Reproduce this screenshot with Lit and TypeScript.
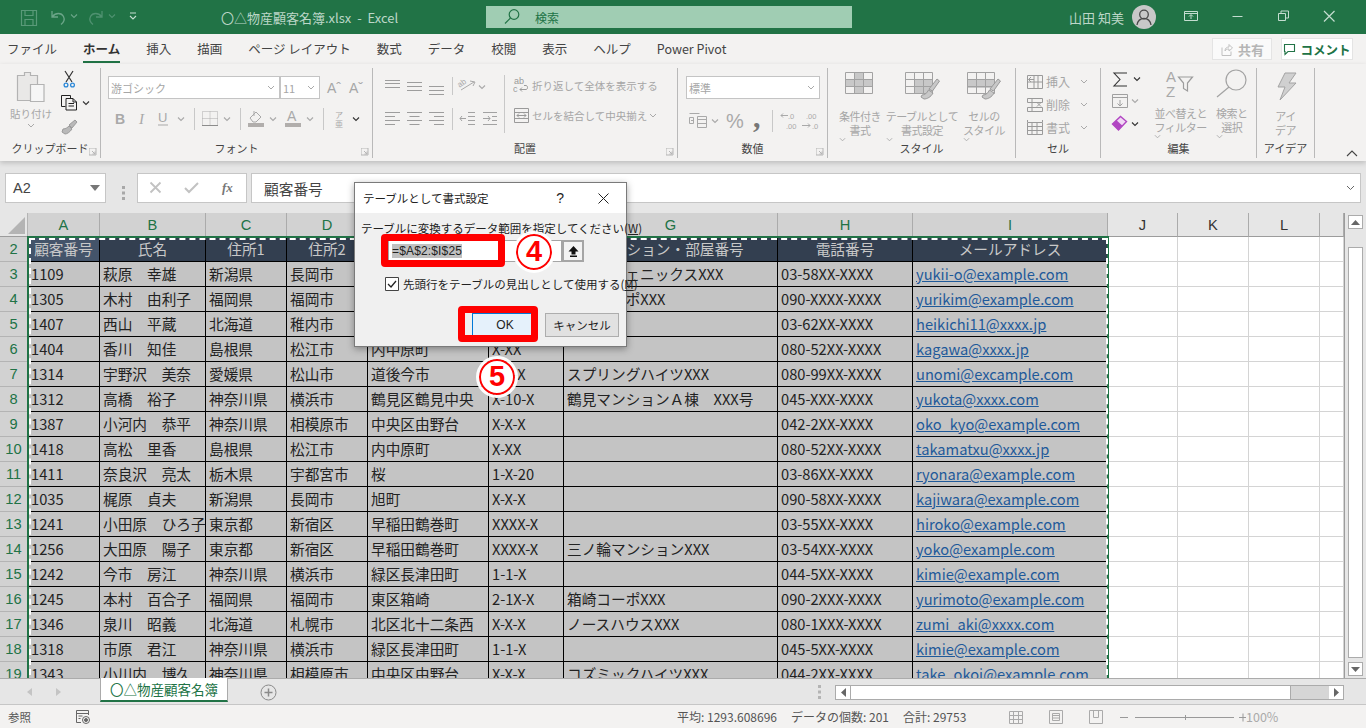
import { LitElement, css, html, svg } from "lit";
import { customElement } from "lit/decorators.js";

const G = "#a9a9a9";
const chev = (x: number, y: number, c = "#a9a9a9") =>
  svg`<path d="M${x - 3} ${y - 1.5}l3 3 3-3" fill="none" stroke=${c} stroke-width="1.1"/>`;
const launcher = (x: number, y: number) =>
  svg`<path d="M${x} ${y}h7v7h-7zM${x + 3} ${y + 3}l3 3M${x + 3.5} ${y + 6}h2.5v-2.5" fill="none" stroke="#b5b5b5"/>`;

const COLS = ["A", "B", "C", "D", "E", "F", "G", "H", "I", "J", "K", "L", ""];
const HEAD = ["顧客番号", "氏名", "住所1", "住所2", "住所3", "番地", "マンション・部屋番号", "電話番号", "メールアドレス"];
const ROWS = [
  ["1109", "萩原　幸雄", "新潟県", "長岡市", "中央区", "X-X-X", "ハイツフェニックスXXX", "03-58XX-XXXX", "yukii-o@example.com"],
  ["1305", "木村　由利子", "福岡県", "福岡市", "東区箱崎", "2-X-X", "箱崎コーポXXX", "090-XXXX-XXXX", "yurikim@example.com"],
  ["1407", "西山　平蔵", "北海道", "稚内市", "中央", "X-X", "", "03-62XX-XXXX", "heikichi11@xxxx.jp"],
  ["1404", "香川　知佳", "島根県", "松江市", "内中原町", "X-XX", "", "080-52XX-XXXX", "kagawa@xxxx.jp"],
  ["1314", "宇野沢　美奈", "愛媛県", "松山市", "道後今市", "X-X-X", "スプリングハイツXXX", "080-99XX-XXXX", "unomi@excample.com"],
  ["1312", "高橋　裕子", "神奈川県", "横浜市", "鶴見区鶴見中央", "X-10-X", "鶴見マンションＡ棟　XXX号", "045-XXX-XXXX", "yukota@xxxx.com"],
  ["1387", "小河内　恭平", "神奈川県", "相模原市", "中央区由野台", "X-X-X", "", "042-2XX-XXXX", "oko_kyo@example.com"],
  ["1418", "高松　里香", "島根県", "松江市", "内中原町", "X-XX", "", "080-52XX-XXXX", "takamatxu@xxxx.jp"],
  ["1411", "奈良沢　亮太", "栃木県", "宇都宮市", "桜", "1-X-20", "", "03-86XX-XXXX", "ryonara@example.com"],
  ["1035", "梶原　貞夫", "新潟県", "長岡市", "旭町", "X-X-X", "", "090-58XX-XXXX", "kajiwara@example.com"],
  ["1241", "小田原　ひろ子", "東京都", "新宿区", "早稲田鶴巻町", "XXXX-X", "", "03-55XX-XXXX", "hiroko@example.com"],
  ["1256", "大田原　陽子", "東京都", "新宿区", "早稲田鶴巻町", "XXXX-X", "三ノ輪マンションXXX", "03-54XX-XXXX", "yoko@example.com"],
  ["1242", "今市　房江", "神奈川県", "横浜市", "緑区長津田町", "1-1-X", "", "044-5XX-XXXX", "kimie@example.com"],
  ["1245", "本村　百合子", "福岡県", "福岡市", "東区箱崎", "2-1X-X", "箱崎コーポXXX", "090-2XXX-XXXX", "yurimoto@example.com"],
  ["1346", "泉川　昭義", "北海道", "札幌市", "北区北十二条西", "X-X-X", "ノースハウスXXX", "080-1XXX-XXXX", "zumi_aki@xxxx.com"],
  ["1318", "市原　君江", "神奈川県", "横浜市", "緑区長津田町", "1-1-X", "", "045-5XX-XXXX", "kimie@example.com"],
  ["1343", "小川内　博久", "神奈川県", "相模原市", "中央区由野台", "X-X-X", "コズミックハイツXXX", "044-2XX-XXXX", "take_okoi@example.com"],
];
const TABS = ["ファイル", "ホーム", "挿入", "描画", "ページ レイアウト", "数式", "データ", "校閲", "表示", "ヘルプ", "Power Pivot"];

const qat = html`<svg class="qat" width="130" height="34" viewBox="14 0 130 34" fill="none">
  <path d="M21.5 10.5h15v15h-15zM25 10.5v5h8v-5M25 25.5v-6h8v6" stroke="#5a9a79" stroke-width="1.2"/>
  <path d="M52 11v6h6M52.5 16.5c3-4 9-4 11 0 1.500 3 0 6-2.500 8" stroke="#6ba588" stroke-width="1.300"/>
  ${chev(74, 16, "#6ba588")}
  <path d="M102 11v6h-6M101.500 16.500c-3-4-9-4-11 0-1.500 3 0 6 2.500 8" stroke="#4f9170" stroke-width="1.300"/>
  ${chev(112, 16, "#4f9170")}
  <path d="M130 13h6M130 16l3 3 3-3" stroke="#c7dfd2" stroke-width="1.100"/>
</svg>`;

const magnifier = html`<svg width="18" height="18" viewBox="517 8 18 18" fill="none" stroke="#217346" stroke-width="1.200">
  <circle cx="528" cy="14.500" r="4.800"/><path d="M524.500 18l-5.500 5.500"/></svg>`;

const avatar = html`<svg width="24" height="24" viewBox="0 0 24 24" fill="none">
  <circle cx="12" cy="12" r="12" fill="#c8c8c8"/>
  <circle cx="12" cy="9.500" r="4.300" stroke="#4a4a4a" stroke-width="1.300"/>
  <path d="M5 20c.8-4.500 3.500-6.500 7-6.500s6.200 2 7 6.500" stroke="#4a4a4a" stroke-width="1.300"/></svg>`;

const winCtl = html`<svg class="winctl" width="170" height="34" viewBox="1190 0 170 34" fill="none" stroke="#c4ddd0">
  <path d="M1198.500 11.500h13v9h-13zM1198.500 13.500h13M1205 19v-4M1203 16.500l2-2 2 2"/>
  <path d="M1246.500 16.500h10"/>
  <path d="M1292.500 13.500h7v7h-7zM1295 13.500v-2.500h7.500v7H1299.500"/>
  <path d="M1338 11l10.500 10.500M1348.500 11L1338 21.500" stroke-width="1.200"/>
</svg>`;

const clipIcons = html`<svg class="clip-small" width="36" height="70" viewBox="56 68 36 70" fill="none">
  <path d="M62 71l7 11M70 71l-7 11" stroke="#333" stroke-width="1.200"/>
  <circle cx="63" cy="85" r="1.900" stroke="#2b88d8" stroke-width="1.300"/>
  <circle cx="69.500" cy="85" r="1.900" stroke="#2b88d8" stroke-width="1.300"/>
  <path d="M62.500 106.500h-4V95.500h9v3M63 98.500h7l3.500 3.500v8H63zM70 98.500v3.500h3.500M65.500 103.500h5.500M65.500 106h5.500" stroke="#222" stroke-width="1"/>
  ${chev(83, 103, "#333")}
  <path d="M66 125l6-5 2 2-5 6zM60 129c3 0 5-2 6-3l3 3c-2 3-5 5-7 5l-3-2z" fill="#b9b9b9" stroke="#9c9c9c"/>
</svg>`;

const pasteIcon = html`<svg width="30" height="32" viewBox="19 71 30 32" fill="none" stroke="#b3b3b3" stroke-width="1.200">
  <path d="M20.500 75.500h7v-3h6v3h7v25h-20z" fill="#e9e8e7"/>
  <path d="M33.500 84.500h13.500v17H33.500z" fill="#f6f6f6"/>
</svg>`;

const fontRow = html`<svg width="262" height="24" viewBox="108 107 262 24" fill="none">
  <text x="115" y="124" font-family="Liberation Sans" font-size="14" font-weight="700" fill=${G}>B</text>
  <text x="139" y="124" font-family="Liberation Serif" font-style="italic" font-size="15" fill=${G}>I</text>
  <text x="158" y="122" font-family="Liberation Sans" font-size="13" fill=${G}>U</text>
  <path d="M158 125h10" stroke=${G}/>
  ${chev(181, 119)}
  <path d="M194.500 108v22M240.500 108v22M323.500 108v22" stroke="#c8c8c8"/>
  <path d="M202.500 111.500h15v14h-15zM210 111.500v14M202.500 118.500h15" stroke="#adadad" stroke-dasharray="1 1"/>
  <path d="M202 125.500h16" stroke="#8c8c8c"/>
  ${chev(227, 119)}
  <path d="M250 118l6-6 5 5-5 5h-3zM254 111v5" stroke=${G}/>
  <path d="M248 123h16v4h-16z" fill="#b1aeac"/>
  ${chev(273, 119)}
  <text x="287" y="121" font-family="Liberation Sans" font-size="14" fill=${G}>A</text>
  <path d="M285 123h16v4h-16z" fill="#b1aeac"/>
  ${chev(310, 119)}
  <text x="335" y="118" font-family="Noto Sans CJK JP" font-size="8" fill=${G}>ア</text>
  <text x="335" y="127" font-family="Noto Sans CJK JP" font-size="8" fill=${G}>亜</text>
  ${chev(356, 119, "#333")}
</svg>`;

const lines = (x: number, ys: number[], ws: number[], align: number) =>
  svg`<path d=${ys.map((y, i) => `M${x + (15 - ws[i]) * align} ${y}.5h${ws[i]}`).join("")} stroke="#9d9d9d"/>`;

const alignIcons = html`<svg width="124" height="60" viewBox="381 74 124 60" fill="none">
  ${lines(385, [80, 83, 87], [15, 15, 15], 0)}
  ${lines(407, [82, 86, 90], [15, 15, 15], 0)}
  ${lines(429, [86, 90, 94], [15, 15, 15], 0)}
  ${lines(385, [112, 116, 120, 124], [15, 10, 15, 10], 0)}
  ${lines(407, [112, 116, 120, 124], [15, 10, 15, 10], 0.5)}
  ${lines(429, [112, 116, 120, 124], [15, 10, 15, 10], 1)}
  <path d="M452.500 77v18M452.500 108v22M504.500 75v58" stroke="#c8c8c8"/>
  <path d="M461 90l13-8M470 81l5 1-2 4" stroke=${G}/>
  <text x="459" y="86" font-family="Liberation Sans" font-size="8" fill=${G} transform="rotate(-35 462 86)">ab</text>
  ${chev(482, 87)}
  <path d="M468 112.500h7M468 116.500h7M468 120.500h7M468 124.500h7M466 118.500h-6M462 116l-2 2.500 2 2.500M483 112.500h14M483 124.500h14M492 116.500h5M492 120.500h5M483 118.500h7M488 116l2 2.500-2 2.500" stroke="#a2a2a2"/>
</svg>`;

const wrapIcon = html`<svg width="17" height="17" viewBox="0 0 17 17" fill="none">
  <text x="1" y="7" font-family="Liberation Sans" font-size="9" fill="#9a9a9a">ab</text>
  <text x="0" y="15" font-family="Liberation Sans" font-size="9" fill="#9a9a9a">c</text>
  <path d="M7 12.500h6c2 0 2-4 0-4h-2M9 10.500l-2 2 2 2" stroke="#9a9a9a"/></svg>`;
const mergeIcon = html`<svg width="17" height="17" viewBox="0 0 17 17" fill="none" stroke="#9a9a9a">
  <path d="M1.500 1.500h14v14h-14zM1.500 5.500h14M1.500 11.500h14M4 8.500h9M6 6.500l-2 2 2 2M11 6.500l2 2-2 2"/></svg>`;

const numRow = html`<svg width="136" height="28" viewBox="685 106 136 28" fill="none">
  <path d="M688.500 111.500h10M688.500 115.500h4v6h-4zM696.500 114.500h9v11h-9zM696.500 117.500h9M696.500 121.500h9M690 118.500h2" stroke=${G}/>
  ${chev(714, 119)}
  <text x="725" y="126" font-family="Liberation Sans" font-size="20" fill=${G}>%</text>
  <text x="752" y="125" font-family="Liberation Serif" font-size="30" font-weight="700" fill="#777">,</text>
  <path d="M771.500 108v22" stroke="#c8c8c8"/>
  <text x="787" y="117" font-family="Liberation Sans" font-size="7.500" fill=${G}>.0</text>
  <text x="785" y="127" font-family="Liberation Sans" font-size="7.500" fill=${G}>.00</text>
  <path d="M780 113.500h7M782 111.500l-2 2 2 2" stroke=${G}/>
  <text x="805" y="117" font-family="Liberation Sans" font-size="7.500" fill=${G}>.00</text>
  <text x="811" y="127" font-family="Liberation Sans" font-size="7.500" fill=${G}>.0</text>
  <path d="M801 123.500h8M807 121.500l2 2-2 2" stroke=${G}/>
</svg>`;

const gridBase = (x: number) =>
  svg`<path d="M${x}.5 75.500h27v21h-27zM${x}.5 82.500h27M${x}.5 89.500h27M${x + 9}.5 75.500v21M${x + 18}.5 75.500v21" stroke="#a2a2a2"/>`;
const brush = (x: number) =>
  svg`<path d="M${x} 92l8-10 2.500 2-7 10zM${x - 7} 98c3 0 5-2 6.500-5l4.500 3c-2 4-6 6-9 6l-3-2z" fill="#c8c8c8" stroke="#9a9a9a"/>`;

const condIcon = html`<svg width="30" height="24" viewBox="846 74 30 24" fill="none">
  <path d="M855 76h9v6h9v7h-9v7h-9zM846 83h9v6h-9z" fill="#c8c8c8"/>${gridBase(846)}</svg>`;
const tableIcon = html`<svg width="36" height="30" viewBox="905 74 36 30" fill="none">
  <path d="M916 83h18v14h-18z" fill="#c8c8c8"/>${gridBase(906)}${brush(930)}</svg>`;
const styleIcon = html`<svg width="36" height="30" viewBox="966 74 36 30" fill="none">
  <path d="M967 82h27v9h-27z" fill="#c8c8c8"/>${gridBase(967)}${brush(990)}</svg>`;

const cellIcon = (p: string) => html`<svg width="17" height="17" viewBox="0 0 17 17" fill="none" stroke="#9a9a9a"><path d=${p}/></svg>`;
const insIcon = cellIcon("M1.500 2.500h15v13h-15zM1.500 9h15M8 2.500v13M12 2.500v13M8 6.500H2.500M5 4l-2.500 2.500L5 9");
const delIcon = cellIcon("M1.500 2.500h15v4h-15zM1.500 11.500h15v4h-15zM6 2.500v13M11 6.500l4 4M15 6.500l-4 4");
const fmtIcon = cellIcon("M1.500 3.500h15v12h-15zM1.500 7.500h15M1.500 11.500h15M6 3.500v12M11 3.500v12M1.500 1v2M16.500 1v2");

const editSmall = html`<svg width="34" height="66" viewBox="1110 70 34 66" fill="none">
  <path d="M1127 73h-13l6 6.500-6 6.500h13" stroke="#333" stroke-width="1.100"/>
  ${chev(1137, 79, "#333")}
  <path d="M1112.500 94.500h15v13h-15zM1112.500 97.500h15M1120 100v6M1117.500 103.500l2.500 2.500 2.500-2.500" stroke="#a0a0a0"/>
  ${chev(1135, 101)}
  <path d="M1112.500 124l8-7.500 6 5-8 8.500z" fill="#f1d8f5" stroke="#b146c2" stroke-width="1.400"/>
  <path d="M1112.500 124l4-3.800 6 5.500-4 4.500z" fill="#b146c2"/>
  ${chev(1135, 124, "#333")}
</svg>`;

const sortIcon = html`<svg width="32" height="30" viewBox="1162 71 32 30" fill="none">
  <text x="1163" y="85" font-family="Liberation Sans" font-size="15" fill=${G}>A</text>
  <text x="1163" y="100" font-family="Liberation Sans" font-size="15" fill=${G}>Z</text>
  <path d="M1175.500 80h14l-5 6v8l-4-2.500V86z" stroke="#9c9c9c" stroke-width="1.200"/>
</svg>`;
const findIcon = html`<svg width="32" height="30" viewBox="1211 71 32 30" fill="none" stroke="#a3a3a3" stroke-width="1.200">
  <circle cx="1231" cy="83" r="10"/><path d="M1224 90l-12 10"/></svg>`;
const boltIcon = html`<svg width="24" height="30" viewBox="1274 71 24 30" fill="none">
  <path d="M1285 73h11l-7 10h7l-16 17 5-13h-7z" fill="#d0d0d0" stroke="#a3a3a3"/></svg>`;

const launchSvg = (x: number) => html`<svg class="launch" width="8" height="8" viewBox="${x} 150 8 8" fill="none">${launcher(x, 150)}</svg>`;

@customElement("app-root")
export class AppRoot extends LitElement {
  static styles = css`
    :host {
      display: block;
      width: 1366px;
      height: 728px;
      overflow: hidden;
      position: relative;
      background: #e6e6e6;
      font-family: "Noto Sans CJK JP", "Liberation Sans", sans-serif;
      color: #444;
    }
    svg {
      display: block;
      flex: none;
    }

    .titlebar {
      height: 34px;
      background: #217346;
      display: flex;
      align-items: center;
      color: #bcd7c8;
      font-size: 13px;
    }
    .qat {
      margin-left: 14px;
    }
    .doc {
      width: 265px;
      margin-left: 77px;
      white-space: pre;
    }
    .search {
      width: 366px;
      height: 22px;
      background: #a0cdb3;
      color: #217346;
      display: flex;
      align-items: center;
      gap: 14px;
      padding-left: 17px;
      box-sizing: border-box;
      font-size: 12px;
    }
    .user {
      margin-left: 217px;
      width: 63px;
    }
    .winctl {
      margin-left: 20px;
    }

    .tabs {
      height: 30px;
      background: #f3f2f1;
      display: flex;
      align-items: center;
      padding-left: 7px;
      gap: 26px;
      font-size: 12.5px;
    }
    .tab {
      position: relative;
      line-height: 26px;
      white-space: nowrap;
    }
    .tab.on {
      font-weight: 700;
      color: #333;
    }
    .tab.on::after {
      content: "";
      position: absolute;
      left: 0;
      right: 0;
      bottom: -1px;
      height: 2px;
      background: #217346;
    }
    .share {
      margin-left: auto;
      width: 60px;
      height: 22px;
      box-sizing: border-box;
      background: #fafafa;
      border: 1px solid #e4e4e4;
      color: #b5b5b5;
      font-size: 13px;
      font-weight: 700;
      display: flex;
      align-items: center;
      justify-content: center;
      gap: 5px;
    }
    .comment {
      width: 72px;
      height: 22px;
      margin: 0 13px 0 -17px;
      box-sizing: border-box;
      background: #fff;
      border: 1px solid #e4e4e4;
      color: #217346;
      font-size: 12.5px;
      font-weight: 700;
      display: flex;
      align-items: center;
      justify-content: center;
      gap: 4px;
    }

    .ribbon {
      height: 97px;
      box-sizing: border-box;
      background: #f3f2f1;
      padding-top: 4px;
      display: flex;
      align-items: flex-start;
      box-shadow: 0 2px 5px rgba(0, 0, 0, 0.18);
      position: relative;
      font-size: 10.5px;
      color: #a6a6a6;
    }
    .group {
      height: 90px;
      box-sizing: border-box;
      border-right: 1px solid #b9b9b9;
      display: flex;
      flex-direction: column;
      position: relative;
      flex: none;
    }
    .body {
      flex: 1;
      display: flex;
      min-height: 0;
    }
    .glabel {
      height: 17px;
      line-height: 15px;
      text-align: center;
      font-size: 11px;
      color: #444;
      white-space: nowrap;
    }
    .launch {
      position: absolute;
      right: 3px;
      bottom: 2px;
    }
    .g-clip {
      width: 101px;
    }
    .g-font {
      width: 272px;
    }
    .g-align {
      width: 305px;
    }
    .g-num {
      width: 150px;
    }
    .g-style {
      width: 188px;
    }
    .g-cell {
      width: 85px;
    }
    .g-edit {
      width: 156px;
    }
    .g-idea {
      width: 58px;
    }
    .paste {
      width: 56px;
      padding-top: 3px;
      display: flex;
      flex-direction: column;
      align-items: center;
      margin-left: 3px;
      box-sizing: border-box;
      line-height: 14px;
    }
    .paste span {
      margin-top: 4px;
      white-space: nowrap;
    }
    .paste svg:last-child {
      margin-top: 2px;
    }
    .font-body {
      flex-direction: column;
      padding: 8px 0 0 7px;
    }
    .combos {
      display: flex;
      align-items: center;
      height: 23px;
      margin-bottom: 8px;
      width: 256px;
    }
    .combo {
      height: 23px;
      box-sizing: border-box;
      background: #fff;
      border: 1px solid #c4c4c4;
      display: flex;
      align-items: center;
      justify-content: space-between;
      padding: 0 4px 0 2px;
      font-size: 11px;
    }
    .combo.f {
      width: 172px;
    }
    .combo.s {
      width: 40px;
    }
    .combo.n {
      width: 134px;
    }
    .grow {
      font-size: 14px;
      font-family: "Liberation Sans", sans-serif;
      margin-left: 7px;
      width: 15px;
    }
    .align-body {
      padding: 6px 0 0 8px;
    }
    .wrapcol {
      margin-left: 8px;
      display: flex;
      flex-direction: column;
      gap: 12px;
      padding-top: 2px;
    }
    .wrapcol div {
      display: flex;
      align-items: center;
      gap: 2px;
      height: 18px;
      white-space: nowrap;
    }
    .num-body {
      flex-direction: column;
      padding: 8px 0 0 8px;
    }
    .num-body .combo {
      margin-bottom: 9px;
    }
    .num-body svg.row {
      margin-left: -1px;
    }
    .big-row {
      padding-top: 3px;
    }
    .big {
      display: flex;
      flex-direction: column;
      align-items: center;
      line-height: 14px;
      text-align: center;
      white-space: nowrap;
      font-size: 11px;
      letter-spacing: -0.5px;
    }
    .big .txt {
      position: absolute;
      top: 38px;
    }
    .big svg.icon {
      margin-bottom: 0;
    }
    .s1 {
      width: 64px;
      margin-left: 0;
    }
    .style-body .big {
      position: relative;
      width: 62px;
    }
    .style-body {
      padding-left: 1px;
    }
    .cell-body {
      flex-direction: column;
      padding: 2px 0 0 10px;
    }
    .cell-row {
      height: 23px;
      display: flex;
      align-items: center;
      gap: 3px;
      font-size: 12px;
    }
    .cell-row svg:last-child {
      margin-left: 7px;
    }
    .edit-body .big {
      position: relative;
    }
    .edit-small {
      margin: 2px 0 0 9px;
    }
    .sort {
      width: 66px;
      margin-left: 7px;
    }
    .find {
      width: 54px;
      margin-left: -3px;
    }
    .idea {
      width: 58px;
      position: relative;
    }
    .collapse {
      position: absolute;
      right: 8px;
      bottom: 4px;
    }

    .fbar {
      height: 52px;
      box-sizing: border-box;
      padding: 12px 5px 0;
      display: flex;
      gap: 4px;
      align-items: flex-start;
    }
    .fbox {
      height: 30px;
      box-sizing: border-box;
      background: #fff;
      border: 1px solid #c6c6c6;
      display: flex;
      align-items: center;
    }
    .name {
      width: 101px;
      justify-content: space-between;
      padding: 0 5px 0 7px;
      font-size: 14.5px;
      font-family: "Liberation Sans", sans-serif;
    }
    .dots {
      width: 27px;
      display: flex;
      justify-content: center;
      margin-right: -4px;
      align-self: center;
    }
    .btns {
      width: 110px;
    }
    .input {
      flex: 1;
      padding-left: 12px;
      font-size: 14.7px;
      color: #444;
      justify-content: space-between;
      padding-right: 5px;
    }

    .sheet {
      height: 465px;
      display: flex;
      position: relative;
      overflow: hidden;
    }
    .grid {
      width: 1344px;
      flex: none;
      display: grid;
      grid-template-columns: 28px 72px 106px 81px 81px 121px 75px 214px 135px 195px 70px 71px 71px 24px;
      grid-auto-rows: 25px;
      grid-template-rows: 24px;
      background: #fff;
      font-size: 14.67px;
      align-content: start;
    }
    .corner {
      background: #e6e6e6;
      border-right: 1px solid #b4b4b4;
      border-bottom: 1px solid #9c9c9c;
      box-sizing: border-box;
    }
    .colh {
      box-sizing: border-box;
      background: #d2d2d2;
      color: #217346;
      border-right: 1px solid #ababab;
      border-bottom: 1px solid #9c9c9c;
      display: flex;
      align-items: center;
      justify-content: center;
      font-family: "Liberation Sans", sans-serif;
    }
    .colh.off {
      background: #e6e6e6;
      color: #333;
    }
    .rowh {
      box-sizing: border-box;
      background: #d2d2d2;
      color: #217346;
      border-right: 1px solid #ababab;
      border-bottom: 1px solid #b4b4b4;
      display: flex;
      align-items: center;
      justify-content: center;
      font-family: "Liberation Sans", sans-serif;
    }
    .c {
      box-sizing: border-box;
      background: #c4c4c4;
      color: #222;
      border-right: 1px solid #000;
      border-bottom: 1px solid #000;
      padding-left: 3px;
      overflow: hidden;
      white-space: nowrap;
      line-height: 24px;
    }
    .c.h {
      background: #333f50;
      color: #c8c8c8;
      text-align: center;
      padding: 0;
    }
    .c.a {
      background: #44546a;
    }
    .c.l {
      color: #1f5a9a;
      text-decoration: underline;
    }
    .e {
      box-sizing: border-box;
      border-right: 1px solid #d4d4d4;
      border-bottom: 1px solid #d4d4d4;
    }
    .vbar {
      width: 22px;
      flex: none;
      box-sizing: border-box;
      border-left: 1px solid #9c9c9c;
      margin-top: 0;
      padding: 2px 3px 2px 3px;
      display: flex;
      flex-direction: column;
      align-items: stretch;
    }
    .sbtn {
      height: 14px;
      flex: none;
      box-sizing: border-box;
      background: #fff;
      border: 1px solid #ababab;
      display: flex;
      align-items: center;
      justify-content: center;
    }
    .thumb {
      flex: 1;
      background: #fff;
      border: 1px solid #ababab;
      box-sizing: border-box;
      margin: 18px 0 4px;
    }
    .march {
      position: absolute;
      left: 27px;
      top: 23px;
      width: 1082px;
      height: 470px;
      box-sizing: border-box;
      border: 2px solid #217346;
    }
    .march::before {
      content: "";
      position: absolute;
      inset: 0;
      border: 2px dashed #fff;
      border-right-color: #fff;
      margin: -0.5px;
    }

    .sheets {
      height: 27px;
      box-sizing: border-box;
      border-top: 1px solid #ababab;
      border-bottom: 1px solid #c6c6c6;
      background: #e6e6e6;
      display: flex;
      align-items: flex-start;
    }
    .nav {
      width: 100px;
      margin-top: 6px;
    }
    .sheet-tab {
      width: 128px;
      height: 24px;
      box-sizing: border-box;
      margin-top: -1px;
      background: #fff;
      border-left: 1px solid #ababab;
      border-right: 1px solid #ababab;
      border-bottom: 2px solid #217346;
      color: #217346;
      font-size: 13.5px;
      line-height: 23px;
      text-align: center;
    }
    .plus {
      margin: 5px 0 0 32px;
    }
    .sdots {
      margin: 6px 0 0 541px;
    }
    .hbar {
      width: 509px;
      height: 15px;
      margin: 6px 0 0 14px;
      box-sizing: border-box;
      border: 1px solid #ababab;
      background: #d6d6d6;
      display: flex;
      justify-content: space-between;
    }
    .hbtn {
      width: 14px;
      background: #fff;
      display: flex;
      align-items: center;
      justify-content: center;
    }
    .hthumb {
      width: 439px;
      background: #fff;
      border: 1px solid #ababab;
      border-width: 0 1px;
      margin-right: auto;
    }

    .status {
      height: 23px;
      background: #f3f2f1;
      display: flex;
      align-items: center;
      font-size: 11.5px;
      color: #555;
      padding-left: 8px;
    }
    .status .mode {
      width: 67px;
    }
    .stats {
      margin-left: 586px;
      width: 329px;
      display: flex;
      gap: 14px;
      white-space: nowrap;
      font-size: 12px;
    }
    .zoomv {
      color: #aaa;
      font-size: 12.5px;
      margin-left: 0;
      white-space: nowrap;
    }

    .dialog {
      position: absolute;
      left: 354px;
      top: 182px;
      width: 273px;
      height: 165px;
      box-sizing: border-box;
      background: #f0f0f0;
      border: 1px solid #7a7a7a;
      box-shadow: 0 2px 7px rgba(0, 0, 0, 0.35);
      color: #222;
      font-size: 11.5px;
      display: flex;
      flex-direction: column;
    }
    .d-title {
      height: 30px;
      flex: none;
      background: #fff;
      display: flex;
      align-items: center;
      padding-left: 8px;
      font-size: 11.5px;
    }
    .d-title .q {
      margin-left: auto;
      margin-right: 34px;
      font-family: "Liberation Sans", sans-serif;
      font-size: 14px;
    }
    .d-title svg {
      margin-right: 17px;
    }
    .d-label {
      margin: 7px 0 0 6px;
      white-space: nowrap;
      line-height: 16px;
    }
    u {
      text-underline-offset: 1px;
    }
    .d-range {
      margin: 4px 0 0 33px;
      height: 22px;
      display: flex;
      width: 196px;
    }
    .d-input {
      width: 174px;
      box-sizing: border-box;
      background: #fff;
      border: 1px solid #a5a5a5;
      font-family: "Liberation Sans", sans-serif;
      font-size: 12px;
      line-height: 20px;
      padding-left: 3px;
    }
    .d-input span {
      background: #c0c0c0;
      color: #222;
      letter-spacing: 0.15px;
    }
    .d-up {
      width: 22px;
      box-sizing: border-box;
      background: #f3f3f3;
      border: 2px solid #a5a5a5;
      display: flex;
      align-items: center;
      justify-content: center;
    }
    .d-check {
      margin: 14px 0 0 30px;
      display: flex;
      align-items: center;
      gap: 4px;
      white-space: nowrap;
    }
    .d-btns {
      display: flex;
      gap: 7px;
      margin: 21px 0 0 117px;
      align-items: center;
    }
    .b {
      height: 24px;
      box-sizing: border-box;
      background: #e1e1e1;
      border: 1px solid #adadad;
      display: flex;
      align-items: center;
      justify-content: center;
      font-size: 11.5px;
    }
    .b.ok {
      width: 66px;
      background: #e5f1fb;
      border-color: #0078d7;
      font-family: "Liberation Sans", sans-serif;
      font-size: 12px;
    }
    .b.no {
      width: 74px;
    }
    .redbox {
      position: absolute;
      box-sizing: border-box;
      border: 7px solid #ff0000;
      border-radius: 4px;
    }
    .r1 {
      left: 381px;
      top: 234px;
      width: 124px;
      height: 33px;
    }
    .r2 {
      left: 458px;
      top: 306px;
      width: 80px;
      height: 36px;
    }
    .num {
      position: absolute;
      width: 36px;
      height: 36px;
      box-sizing: border-box;
      border-radius: 50%;
      background: #fff;
      border: 2px solid #ff0000;
      outline: 3px solid rgba(255, 255, 255, 0.95);
      color: #ff0000;
      font-family: "Liberation Sans", sans-serif;
      font-weight: 700;
      font-size: 29px;
      line-height: 31px;
      text-align: center;
    }
    .n4 {
      left: 516px;
      top: 234px;
    }
    .n5 {
      left: 479px;
      top: 359px;
    }
  `;

  render() {
    return html`
      <div class="titlebar">
        ${qat}
        <div class="doc">〇△物産顧客名簿.xlsx  -  Excel</div>
        <div class="search">${magnifier}<span>検索</span></div>
        <div class="user">山田 知美</div>
        ${avatar} ${winCtl}
      </div>
      <div class="tabs">
        ${TABS.map((t, i) => html`<div class="tab ${i === 1 ? "on" : ""}">${t}</div>`)}
        <div class="share">
          <svg width="13" height="13" viewBox="0 0 13 13" fill="none" stroke="#c0c0c0"><path d="M2 4.500v8h9v-4M5 8c0-3 2-4 4-4V1.500l3.500 3.500L9 8V6c-2 0-3 .5-4 2z"/></svg>共有
        </div>
        <div class="comment">
          <svg width="13" height="13" viewBox="0 0 13 13" fill="none" stroke="#217346" stroke-width="1.100"><path d="M1.500 1.500h10v7H5l-3 3v-3h-.5z"/></svg>コメント
        </div>
      </div>
      <div class="ribbon">
        ${this.renderClipboard()} ${this.renderFont()} ${this.renderAlign()} ${this.renderNumber()}
        ${this.renderStyles()} ${this.renderCells()} ${this.renderEdit()} ${this.renderIdeas()}
        <svg class="collapse" width="12" height="7" viewBox="0 0 12 7" fill="none" stroke="#444" stroke-width="1.100"><path d="M1 6l5-5 5 5"/></svg>
      </div>
      ${this.renderFormulaBar()} ${this.renderSheet()} ${this.renderTabs()} ${this.renderStatus()} ${this.renderDialog()}
    `;
  }

  renderClipboard() {
    return html`<div class="group g-clip">
      <div class="body">
        <div class="paste">
          ${pasteIcon}<span>貼り付け</span>
          <svg width="8" height="5" viewBox="0 0 8 5" fill="none" stroke="#a9a9a9"><path d="M1 1l3 3 3-3"/></svg>
        </div>
        ${clipIcons}
      </div>
      <div class="glabel">クリップボード</div>
      ${launchSvg(92)}
    </div>`;
  }

  renderFont() {
    return html`<div class="group g-font">
      <div class="body font-body">
        <div class="combos">
          <div class="combo f"><span>游ゴシック</span><svg width="8" height="5" viewBox="0 0 8 5" fill="none" stroke="#a9a9a9"><path d="M1 1l3 3 3-3"/></svg></div>
          <div class="combo s"><span>11</span><svg width="8" height="5" viewBox="0 0 8 5" fill="none" stroke="#a9a9a9"><path d="M1 1l3 3 3-3"/></svg></div>
          <span class="grow">Aˆ</span><span class="grow">Aˇ</span>
        </div>
        ${fontRow}
      </div>
      <div class="glabel">フォント</div>
      ${launchSvg(361)}
    </div>`;
  }

  renderAlign() {
    return html`<div class="group g-align">
      <div class="body align-body">
        ${alignIcons}
        <div class="wrapcol">
          <div>${wrapIcon}折り返して全体を表示する</div>
          <div>${mergeIcon}セルを結合して中央揃え <svg width="8" height="5" viewBox="0 0 8 5" fill="none" stroke="#a9a9a9"><path d="M1 1l3 3 3-3"/></svg></div>
        </div>
      </div>
      <div class="glabel">配置</div>
      ${launchSvg(666)}
    </div>`;
  }

  renderNumber() {
    return html`<div class="group g-num">
      <div class="body num-body">
        <div class="combo n"><span>標準</span><svg width="8" height="5" viewBox="0 0 8 5" fill="none" stroke="#a9a9a9"><path d="M1 1l3 3 3-3"/></svg></div>
        <svg class="row" width="136" height="28" viewBox="685 106 136 28"><use href="#none"></use></svg>
      </div>
      <div class="glabel">数値</div>
      ${launchSvg(816)}
    </div>`.strings ? html`<div class="group g-num">
      <div class="body num-body">
        <div class="combo n"><span>標準</span><svg width="8" height="5" viewBox="0 0 8 5" fill="none" stroke="#a9a9a9"><path d="M1 1l3 3 3-3"/></svg></div>
        ${numRow}
      </div>
      <div class="glabel">数値</div>
      ${launchSvg(816)}
    </div>` : "";
  }

  renderStyles() {
    const v = html`<svg width="7" height="5" viewBox="0 0 8 5" fill="none" stroke="#a9a9a9"><path d="M1 1l3 3 3-3"/></svg>`;
    return html`<div class="group g-style">
      <div class="body big-row style-body">
        <div class="big s1">${condIcon}<div class="txt">条件付き<br />書式 ${v}</div></div>
        <div class="big s1">${tableIcon}<div class="txt">テーブルとして<br />書式設定 ${v}</div></div>
        <div class="big s1">${styleIcon}<div class="txt">セルの<br />スタイル ${v}</div></div>
      </div>
      <div class="glabel">スタイル</div>
    </div>`;
  }

  renderCells() {
    const v = html`<svg width="8" height="5" viewBox="0 0 8 5" fill="none" stroke="#a9a9a9"><path d="M1 1l3 3 3-3"/></svg>`;
    return html`<div class="group g-cell">
      <div class="body cell-body">
        <div class="cell-row">${insIcon}<span>挿入</span>${v}</div>
        <div class="cell-row">${delIcon}<span>削除</span>${v}</div>
        <div class="cell-row">${fmtIcon}<span>書式</span>${v}</div>
      </div>
      <div class="glabel">セル</div>
    </div>`;
  }

  renderEdit() {
    const v = html`<svg width="7" height="5" viewBox="0 0 8 5" fill="none" stroke="#a9a9a9"><path d="M1 1l3 3 3-3"/></svg>`;
    return html`<div class="group g-edit">
      <div class="body edit-body">
        <div class="edit-small">${editSmall}</div>
        <div class="big sort">${sortIcon}<div class="txt">並べ替えと<br />フィルター ${v}</div></div>
        <div class="big find">${findIcon}<div class="txt">検索と<br />選択 ${v}</div></div>
      </div>
      <div class="glabel">編集</div>
    </div>`;
  }

  renderIdeas() {
    return html`<div class="group g-idea">
      <div class="body big-row">
        <div class="big idea">${boltIcon}<div class="txt">アイ<br />デア</div></div>
      </div>
      <div class="glabel">アイデア</div>
    </div>`;
  }

  renderFormulaBar() {
    return html`<div class="fbar">
      <div class="fbox name">
        <span>A2</span>
        <svg width="10" height="6" viewBox="0 0 10 6"><path d="M0 0h10L5 6z" fill="#777"/></svg>
      </div>
      <div class="dots">
        <svg width="3" height="14" viewBox="0 0 3 14" fill="#a8a8a8"><path d="M0 0h3v3H0zM0 5.500h3v3H0zM0 11h3v3H0z"/></svg>
      </div>
      <div class="fbox btns">
        <svg width="108" height="28" viewBox="138 174 108 28" fill="none">
          <path d="M150.500 182.500l10 10M160.500 182.500l-10 10" stroke="#c2c2c2" stroke-width="1.800"/>
          <path d="M185 188l4 4 9-9" stroke="#c2c2c2" stroke-width="2"/>
          <text x="222" y="192" font-family="Liberation Serif" font-style="italic" font-weight="700" font-size="13" fill="#777">fx</text>
        </svg>
      </div>
      <div class="fbox input">
        <span>顧客番号</span>
        <svg width="9" height="6" viewBox="0 0 9 6" fill="none" stroke="#666"><path d="M1 1l3.500 3.500L8 1"/></svg>
      </div>
    </div>`;
  }

  renderSheet() {
    return html`<div class="sheet">
      <div class="grid">
        <div class="corner">
          <svg width="27" height="23" viewBox="0 0 27 23"><path d="M25 4v17H8z" fill="#b4b4b4"/></svg>
        </div>
        ${COLS.map((c, i) => html`<div class="colh ${i > 8 ? "off" : ""}">${c}</div>`)}
        <div class="rowh">2</div>
        ${HEAD.map((h, i) => html`<div class="c h ${i === 0 ? "a" : ""}">${h}</div>`)}
        ${this.blanks()}
        ${ROWS.map(
          (r, i) => html`<div class="rowh">${i + 3}</div>
            ${r.map((v, j) => html`<div class="c ${j === 8 ? "l" : ""}">${v}</div>`)} ${this.blanks()}`
        )}
      </div>
      <div class="vbar">
        <div class="sbtn"><svg width="9" height="5" viewBox="0 0 9 5"><path d="M4.500 0L9 5H0z" fill="#666"/></svg></div>
        <div class="thumb"></div>
        <div class="sbtn"><svg width="9" height="5" viewBox="0 0 9 5"><path d="M0 0h9L4.500 5z" fill="#666"/></svg></div>
        <div style="height:0"></div>
      </div>
      <div class="march"></div>
    </div>`;
  }

  blanks() {
    return [0, 1, 2, 3].map(() => html`<div class="e"></div>`);
  }

  renderTabs() {
    return html`<div class="sheets">
      <svg class="nav" width="100" height="14" viewBox="0 0 100 14" fill="#c4c4c4"><path d="M32 3v8l-5-4zM56 3v8l5-4z"/></svg>
      <div class="sheet-tab">〇△物産顧客名簿</div>
      <svg class="plus" width="17" height="17" viewBox="0 0 17 17" fill="none" stroke="#8a8a8a"><circle cx="8.500" cy="8.500" r="7.500"/><path d="M4.500 8.500h8M8.500 4.500v8" stroke-width="1.500"/></svg>
      <svg class="sdots" width="3" height="14" viewBox="0 0 3 14" fill="#b4b4b4"><path d="M0 0h3v3H0zM0 5.500h3v3H0zM0 11h3v3H0z"/></svg>
      <div class="hbar">
        <div class="hbtn"><svg width="5" height="9" viewBox="0 0 5 9"><path d="M5 0v9L0 4.500z" fill="#666"/></svg></div>
        <div class="hthumb"></div>
        <div class="hbtn"><svg width="5" height="9" viewBox="0 0 5 9"><path d="M0 0v9l5-4.500z" fill="#666"/></svg></div>
      </div>
    </div>`;
  }

  renderStatus() {
    return html`<div class="status">
      <div class="mode">参照</div>
      <svg width="16" height="16" viewBox="0 0 16 16" fill="none" stroke="#666"><path d="M6 13.500H1.500v-12h12V6M1.500 4.500h12M3.500 7h4M3.500 9.500h2"/><circle cx="11" cy="11" r="3.500"/><circle cx="11" cy="11" r="1.500" fill="#666"/></svg>
      <div class="stats"><span>平均: 1293.608696</span><span>データの個数: 201</span><span>合計: 29753</span></div>
      <svg width="240" height="16" viewBox="1070 0 240 16" fill="none" stroke="#aaa">
        <path d="M1073.500 2.500h13v12h-13zM1073.500 6.500h13M1073.500 10.500h13M1077.500 2.500v12M1082.500 2.500v12"/>
        <path d="M1113.500 1.500h13v13h-13zM1116.500 4.500h7v7h-7zM1117 6.500h6M1117 9h6"/>
        <path d="M1153.500 1.500h13v13h-13zM1157.500 1.500v7h5v-7"/>
        <path d="M1184 8.500h8M1199 8.500h99M1249.500 6v5M1303 8.500h8M1307 4.500v8" stroke="#999"/>
      </svg>
      <div class="zoomv">100%</div>
    </div>`;
  }

  renderDialog() {
    return html`<div class="dialog">
        <div class="d-title">
          テーブルとして書式設定
          <span class="q">?</span>
          <svg width="11" height="11" viewBox="0 0 11 11" fill="none" stroke="#222"><path d="M.5.500l10 10M10.500.500l-10 10"/></svg>
        </div>
        <div class="d-label">テーブルに変換するデータ範囲を指定してください(<u>W</u>)</div>
        <div class="d-range">
          <div class="d-input"><span>=$A$2:$I$25</span></div>
          <div class="d-up"><svg width="11" height="12" viewBox="0 0 11 12"><path d="M5.500 1L10.500 6.500H7.500V9.500H3.500V6.500H.5zM2 10.500h7V12H2z" fill="#111"/></svg></div>
        </div>
        <div class="d-check">
          <svg width="14" height="14" viewBox="0 0 14 14" fill="#fff" stroke="#444"><path d="M.5.500h13v13H.5z"/><path d="M3 7l3 3 5-6" fill="none" stroke="#222" stroke-width="1.300"/></svg>
          <span>先頭行をテーブルの見出しとして使用する(<u>M</u>)</span>
        </div>
        <div class="d-btns">
          <div class="b ok">OK</div>
          <div class="b no">キャンセル</div>
        </div>
      </div>
      <div class="redbox r1"></div>
      <div class="redbox r2"></div>
      <div class="num n4">4</div>
      <div class="num n5">5</div>`;
  }
}
